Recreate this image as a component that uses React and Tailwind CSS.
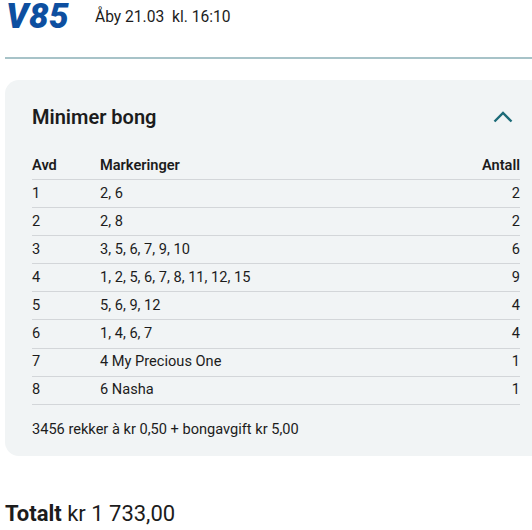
import React from "react";

const rows = [
  ["1", "2, 6", "2"],
  ["2", "2, 8", "2"],
  ["3", "3, 5, 6, 7, 9, 10", "6"],
  ["4", "1, 2, 5, 6, 7, 8, 11, 12, 15", "9"],
  ["5", "5, 6, 9, 12", "4"],
  ["6", "1, 4, 6, 7", "4"],
  ["7", "4 My Precious One", "1"],
  ["8", "6 Nasha", "1"],
];

export default function App() {
  return (
    <div className="w-[532px] h-[530px] overflow-hidden bg-white font-['Roboto',sans-serif] text-[#1c1c1c]">
      <div className="flex items-start pl-[5px]">
        <div className="w-[90px] pl-[1px] text-[35px] leading-[34px] font-black italic text-[#0d4fa0] tracking-[0.5px]">
          V85
        </div>
        <div className="mt-[7px] text-[15.6px] leading-5 whitespace-pre">Åby 21.03  kl. 16:10</div>
      </div>
      <div className="ml-[5px] mt-[23px] h-[2px] bg-[#a7c3c8]" />
      <div className="ml-[5px] mt-[21px] w-[542px] rounded-[14px] bg-[#f1f4f5] px-[27px] pt-[23px] pb-[17px]">
        <div className="flex items-center justify-between">
          <div className="text-[20px] leading-7 font-semibold">Minimer bong</div>
          <svg className="mr-[7px]" width="20" height="12" viewBox="0 0 20 12" fill="none">
            <polyline points="1.5,10.5 10,2 18.5,10.5" stroke="#1d6b78" strokeWidth="2.4" />
          </svg>
        </div>
        <div className="mt-[21px] text-[14.6px]">
          <div className="flex h-[28px] items-center border-b border-[#d3d6d9] font-semibold">
            <div className="w-[68px]">Avd</div>
            <div className="flex-1">Markeringer</div>
            <div>Antall</div>
          </div>
          {rows.map((r) => (
            <div key={r[0]} className="flex h-[28.1px] items-center border-b border-[#d3d6d9]">
              <div className="w-[68px]">{r[0]}</div>
              <div className="flex-1">{r[1]}</div>
              <div>{r[2]}</div>
            </div>
          ))}
        </div>
        <div className="pt-[14px] text-[14.6px] leading-5">3456 rekker à kr 0,50 + bongavgift kr 5,00</div>
      </div>
      <div className="ml-[5px] mt-[44px] text-[22px] leading-7">
        <span className="font-bold">Totalt</span> kr 1 733,00
      </div>
    </div>
  );
}
